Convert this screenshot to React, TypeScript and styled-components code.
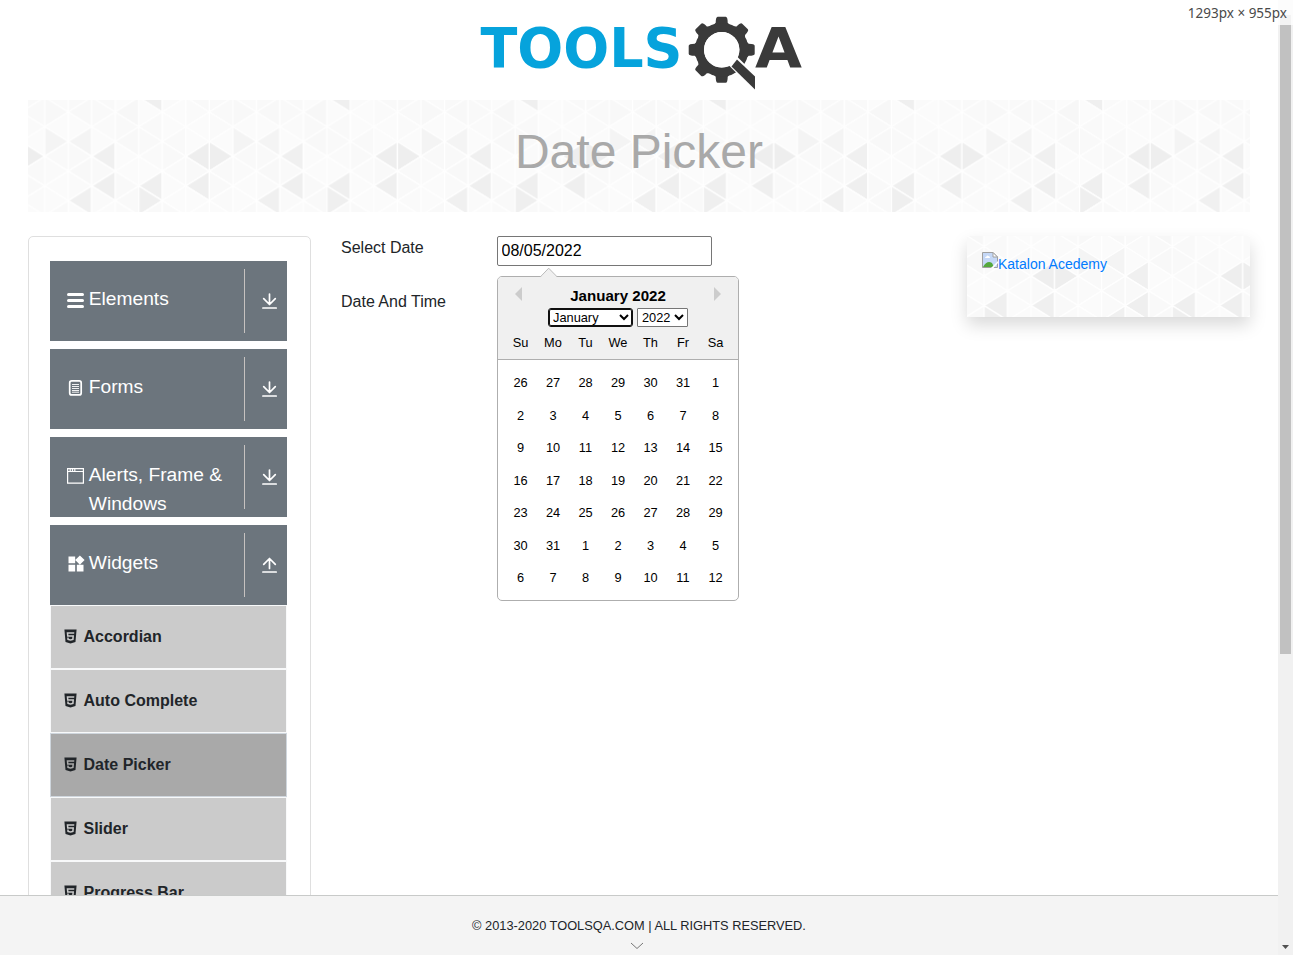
import React from 'react';
import styled, { createGlobalStyle } from 'styled-components';
import { MdWidgets } from 'react-icons/md';
import { AiFillHtml5 } from 'react-icons/ai';

const Global = createGlobalStyle`
  *, *::before, *::after { box-sizing: border-box; }
  body { margin: 0; background: #fff; color: #212529; font: 16px/24px "Liberation Sans", Arial, sans-serif; overflow: hidden; }
  h1, ul { margin: 0; padding: 0; list-style: none; }
`;

const Window = styled.div`display: flex; height: 955px; width: 1293px; position: relative;`;
const Page = styled.div`width: 1278px; height: 955px; display: flex; flex-direction: column;`;
const Main = styled.main`flex: 1; min-height: 0; overflow: hidden; padding: 0 28px;`;
const Header = styled.header`height: 100px; display: flex; padding: 12px 0 0 450px;`;
const Banner = styled.div`
  position: relative; height: 112px; padding-top: 23px; text-align: center; overflow: hidden;
`;
const Title = styled.h1`position: relative; font-size: 48px; line-height: 57.6px; font-weight: 400; color: #a9a9a9;`;
const Texture = styled.svg`position: absolute; inset: 0; width: 100%; height: 100%;`;
const Columns = styled.div`display: grid; grid-template-columns: 283px 596px 283px; column-gap: 30px; align-items: start; padding-top: 24px;`;

const Sidebar = styled.nav`border: 1px solid #dfdfdf; border-radius: 5px; padding: 24px 23px 0 21px; height: 900px;`;
const Group = styled.div`
  height: 80px; margin-bottom: ${(p: { $open?: boolean }) => (p.$open ? 0 : 8)}px;
  background: #6c757d; color: #fff; display: flex; overflow: hidden;
`;
const GroupIcon = styled.span`width: 38.8px; padding: 30px 0 0 17px; svg { display: block; }`;
const GroupText = styled.span`width: 155.2px; padding-top: 24px; font-size: 19.2px; line-height: 28.8px;`;
const GroupArrow = styled.span`
  width: 43px; height: 64px; margin-top: 8px; border-left: 1px solid #c6c2c0; padding: 24px 0 0 17px;
  svg { display: block; }
`;
const WidgetsIcon = styled(MdWidgets)`margin: -1px 0 0 -1px;`;
const Item = styled.li`
  height: 64px; display: flex; align-items: center; padding: 0 0 0 11px; font-weight: 700;
  border: 1px solid ${(p: { $active?: boolean }) => (p.$active ? '#cfd6dd' : '#f8f9fa')};
  background: ${(p: { $active?: boolean }) => (p.$active ? '#a9a9a9' : '#cbcbcb')};
  svg { width: 17px; height: 17px; margin: 0 4.5px 1px 0; flex: none; }
`;

const Form = styled.div`display: flex; flex-direction: column; gap: 24px;`;
const Field = styled.div`display: flex; height: 30px; position: relative;`;
const Label = styled.label`width: 156px; line-height: 24px;`;
const DateInput = styled.input`
  width: 215px; height: 30px; padding: 1px 3.5px 2px; border: 1px solid #767676; border-radius: 2px; outline: 0;
  font: 16px "Liberation Sans", Arial, sans-serif; color: #000; background: #fff;
`;
const Popup = styled.div`
  position: absolute; z-index: 2; left: 156px; top: 40px; width: 242px; height: 325px;
  border: 1px solid #aeaeae; border-radius: 5px; background: #fff; color: #000;
  font-size: 12.8px;
`;
const Pointer = styled.svg`position: absolute; left: 42px; top: -10px;`;
const CalHead = styled.div`
  height: 83px; background: #f0f0f0; border-bottom: 1px solid #aeaeae; border-radius: 4px 4px 0 0;
`;
const MonthBar = styled.div`display: flex; justify-content: space-between; padding: 9px 16px 0; height: 29px; font-size: 15.1px; font-weight: 700; line-height: 20px;`;
const Selects = styled.div`display: flex; justify-content: center; gap: 4px; height: 23px; padding-top: 2px;`;
const Select = styled.select`
  height: 19px; width: ${(p: { $w: number; $focus?: boolean }) => p.$w}px; padding: 0; background: #fff;
  border: 1px solid ${p => (p.$focus ? '#101010' : '#767676')};
  box-shadow: ${p => (p.$focus ? 'inset 0 0 0 1px #101010' : 'none')};
  border-radius: ${p => (p.$focus ? 3 : 1)}px; color: #000; outline: 0;
  font: 12.8px "Liberation Sans", Arial, sans-serif;
`;
const Week = styled.div`
  display: grid; grid-template-columns: repeat(7, 32.5px); justify-content: center; text-align: center;
  line-height: ${(p: { $head?: boolean }) => (p.$head ? 28 : 32.5)}px;
`;
const Days = styled.div`padding-top: 7px;`;

const Promo = styled.aside`
  position: relative; height: 81px; padding: 16px 15px; font-size: 14px; line-height: 24px; color: #007bff;
  box-shadow: 0 8px 16px rgba(0, 0, 0, .15);
`;
const PromoLink = styled.span`position: relative; display: flex; svg { display: block; }`;

const Footer = styled.footer`
  height: 60px; border-top: 1px solid #c8cac9; background: #f4f4f4; text-align: center; font-size: 12.8px; line-height: 20px;
  padding-top: 20px; svg { display: block; margin: 6px 0 0 630px; }
`;
const Scroll = styled.div`width: 15px; background: #f1f1f1; display: flex; flex-direction: column; justify-content: space-between; align-items: center; padding: 15px 0 5px;`;
const Thumb = styled.div`width: 11px; height: 639px; background: #c1c1c1;`;
const SizeTag = styled.div`
  position: absolute; top: 0; right: 0; height: 25px; padding: 0 6px 0 5px; background: rgba(255,255,255,.8);
  font: 13.5px/26px "Noto Sans", sans-serif; color: #4a4a4a; white-space: nowrap;
`;

const COL = 23.52;
const ROW = 14.77;
const SHADES: Record<string, string> = {
  '6,4': '#eeeeee', '7,4': '#eeeeee', '0,3': '#f4f4f4', '1,3': '#f4f4f4', '2,4': '#f0f0f0',
  '2,6': '#efefef', '4,6': '#efefef', '6,6': '#efefef', '4,7': '#efefef', '1,7': '#f0f0f0', '4,0': '#efefef',
  '1,1': '#f8f8f8', '3,3': '#f8f8f8', '0,1': '#f8f8f8', '3,1': '#f7f7f7', '5,4': '#f9f9f9', '1,5': '#f8f8f8', '2,5': '#f9f9f9',
};
const LIGHT = ['#fafafa', '#f9f9f9', '#fbfbfb', '#f9f9f9', '#fbfbfb'];

function Triangles({ id, x, y }: { id: string; x: number; y: number }) {
  const cells = [];
  for (let k = 0; k < 8; k++) {
    for (let j = 0; j < 10; j++) {
      const l = k * COL, r = l + COL, c = j * ROW;
      const points = (k + j) % 2 === 0
        ? `${l},${c} ${r},${c - ROW} ${r},${c + ROW}`
        : `${r},${c} ${l},${c - ROW} ${l},${c + ROW}`;
      cells.push(<polygon key={`${k}-${j}`} points={points} fill={SHADES[`${k},${j}`] || LIGHT[(k * 3 + j * 2) % 5]} />);
    }
  }
  return (
    <Texture aria-hidden>
      <defs>
        <pattern id={id} x={x} y={y - 160} width={COL * 8} height={320} patternUnits="userSpaceOnUse">
          <rect width="200" height="320" fill="#fafafa" />
          <g transform="translate(0 160)" stroke="#fff" strokeWidth="1.3" strokeLinejoin="round">{cells}</g>
        </pattern>
      </defs>
      <rect width="100%" height="100%" fill={`url(#${id})`} />
    </Texture>
  );
}

const TOOTH = 'M24-9L27-6Q33-6 33-4V4Q33 6 27 6L24 9Z';
const Logo = () => (
  <svg width="326" height="80" viewBox="478 12 326 80">
    <g fontFamily="DejaVu Sans" fontWeight="700" fontSize="56">
      <text x="480.5" y="67" textLength="202" lengthAdjust="spacingAndGlyphs" fill="#06a3dc">TOOLS</text>
      <text x="755" y="67" textLength="47" lengthAdjust="spacingAndGlyphs" fill="#3a3a3a">A</text>
    </g>
    <g fill="#3a3a3a">
      {[0, 90, 135, 180, 225, 270, 315].map(a => (
        <path key={a} transform={`translate(721.7 49.8) rotate(${a})`} d={TOOTH} />
      ))}
      <circle cx="721.7" cy="49.8" r="22.2" fill="none" stroke="#3a3a3a" strokeWidth="9" />
      <path d="M729 57L750 78" stroke="#fff" strokeWidth="12" />
      <circle cx="721.7" cy="49.8" r="17.7" fill="#fff" />
      <path d="M737 59.5L755 76.5V89.5L731.5 66.5Z" />
    </g>
  </svg>
);

const stroke = { fill: 'none', stroke: 'currentColor' };
const BarsIcon = () => <svg width="17" height="18"><path {...stroke} strokeWidth="3" strokeLinecap="round" d="M1.5 3.5H15.5M1.5 9.5H15.5M1.5 15.5H15.5" /></svg>;
const PaperIcon = () => (
  <svg width="17" height="18"><rect x="2.7" y="1.9" width="11.5" height="14" rx="2" {...stroke} strokeWidth="1.7" />
    <path {...stroke} d="M5 5.5H12M5 7.5H12M5 9.5H12M5 11.5H12M5 13.2H12" strokeWidth=".9" /></svg>
);
const WindowIcon = () => <svg width="17" height="18"><path {...stroke} d="M.6 1.6H16.4V16.2H.6ZM.6 4.5H16.4M3.2 1.5V4M5.5 1.5V4M7.8 1.5V4" strokeWidth="1.2" /></svg>;
const ArrowIcon = ({ up }: { up?: boolean }) => (
  <svg width="16" height="17"><path {...stroke} strokeWidth="1.7" strokeLinecap="round" strokeLinejoin="round"
    d={up ? 'M7.5 11.5V1.5M1.7 7.3L7.5 1.5L13.3 7.3M.9 15H14.2' : 'M7.5 1V11.2M1.7 5.7L7.5 11.5L13.3 5.7M.9 15H14.2'} /></svg>
);
const BrokenImage = () => (
  <svg width="16" height="16">
    <path d="M.5.5H11L15.5 5V15.5H.5Z" fill="#c5d8f7" stroke="#a0a0a0" />
    <path d="M11 .5V5H15.5Z" fill="#fff" stroke="#a0a0a0" />
    <path d="M3 6Q3 4.5 4.5 4.5Q5 3 6.5 4Q8 4 8 6Z" fill="#fff" />
    <path d="M1 15Q5 8 10 11L12 15Z" fill="#55a83c" />
    <path d="M9 16L16 9V11L11.5 16Z" fill="#fff" />
  </svg>
);

const groups = [
  { text: 'Elements', icon: <BarsIcon /> },
  { text: 'Forms', icon: <PaperIcon /> },
  { text: 'Alerts, Frame & Windows', icon: <WindowIcon /> },
  { text: 'Widgets', icon: <WidgetsIcon size={20} />, open: true },
];
const items = ['Accordian', 'Auto Complete', 'Date Picker', 'Slider', 'Progress Bar'];
const weekdays = ['Su', 'Mo', 'Tu', 'We', 'Th', 'Fr', 'Sa'];
const weeks = Array.from({ length: 7 }, (_, w) =>
  Array.from({ length: 7 }, (_, d) => new Date(2021, 11, 26 + w * 7 + d).getDate()));

export default function App() {
  return (
    <Window>
      <Global />
      <Page>
        <Main>
          <Header><Logo /></Header>
          <Banner><Triangles id="banner-tile" x={16.7} y={-2.7} /><Title>Date Picker</Title></Banner>
          <Columns>
            <Sidebar>
              {groups.map(g => (
                <Group key={g.text} $open={g.open}>
                  <GroupIcon>{g.icon}</GroupIcon>
                  <GroupText>{g.text}</GroupText>
                  <GroupArrow><ArrowIcon up={g.open} /></GroupArrow>
                </Group>
              ))}
              <ul>{items.map(t => <Item key={t} $active={t === 'Date Picker'}><AiFillHtml5 />{t}</Item>)}</ul>
            </Sidebar>
            <Form>
              <Field>
                <Label>Select Date</Label>
                <DateInput defaultValue="08/05/2022" />
                <Popup>
                  <CalHead>
                    <MonthBar>
                      <svg width="8" height="16"><path d="M8 1V15L1 8Z" fill="#ccc" /></svg>
                      <span>January 2022</span>
                      <svg width="8" height="16"><path d="M0 1V15L7 8Z" fill="#ccc" /></svg>
                    </MonthBar>
                    <Selects>
                      <Select $w={85} $focus><option>January</option></Select>
                      <Select $w={51}><option>2022</option></Select>
                    </Selects>
                    <Week $head>{weekdays.map(d => <span key={d}>{d}</span>)}</Week>
                  </CalHead>
                  <Days>{weeks.map((w, i) => <Week key={i}>{w.map((d, n) => <span key={n}>{d}</span>)}</Week>)}</Days>
                  <Pointer width="18" height="11"><path d="M.5 10L8.7 1.2L17 10V11H.5Z" fill="#f0f0f0" /><path d="M.5 9.7L8.7 1.2L17 9.7" fill="none" stroke="#bbb" /></Pointer>
                </Popup>
              </Field>
              <Field><Label>Date And Time</Label></Field>
            </Form>
            <Promo>
              <Triangles id="promo-tile" x={-77} y={-19} />
              <PromoLink><BrokenImage />Katalon Acedemy</PromoLink>
            </Promo>
          </Columns>
        </Main>
        <Footer>
          © 2013-2020 TOOLSQA.COM | ALL RIGHTS RESERVED.
          <svg width="14" height="9"><path d="M1 1L7 6.5L13 1" fill="none" stroke="#777" /></svg>
        </Footer>
      </Page>
      <Scroll>
        <Thumb />
        <svg width="7" height="5"><path d="M0 0H7L3.5 4Z" fill="#505050" /></svg>
      </Scroll>
      <SizeTag>1293px × 955px</SizeTag>
    </Window>
  );
}
